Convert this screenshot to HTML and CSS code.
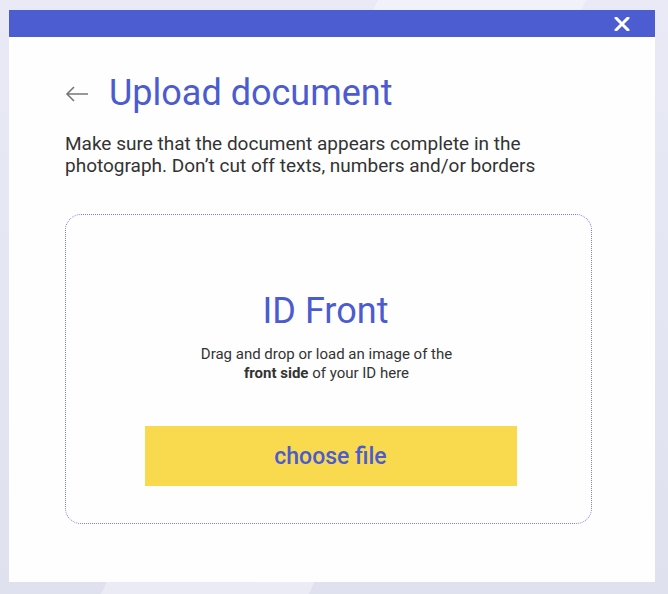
FILE: index.html
```html
<!DOCTYPE html>
<html lang="en">
<head>
<meta charset="utf-8">
<title>Upload document</title>
<link rel="stylesheet" href="styles.css">
</head>
<body>
<div class="modal">
  <div class="modal-bar">
    <button class="close" aria-label="Close">
      <svg width="16" height="14" viewBox="0 0 16 14"><path d="M2 1 L14 13 M14 1 L2 13" stroke="#fff" stroke-width="3" stroke-linecap="round"/></svg>
    </button>
  </div>
  <div class="modal-body">
    <div class="title-row">
      <svg class="back" width="24" height="16" viewBox="0 0 24 16"><path d="M23 8 H2 M9 1 L2 8 L9 15" fill="none" stroke="#777" stroke-width="1.6"/></svg>
      <h1 class="title">Upload document</h1>
    </div>
    <p class="lead">Make sure that the document appears complete in the photograph. Don’t cut off texts, numbers and/or borders</p>
    <div class="dropzone">
      <h2 class="dz-title">ID Front</h2>
      <p class="dz-text">Drag and drop or load an image of the<br><strong>front side</strong> of your ID here</p>
      <button class="choose">choose file</button>
    </div>
  </div>
</div>
</body>
</html>
```
FILE: styles.css
```css
* { box-sizing: border-box; }
html, body { height: 100%; }
body {
  margin: 0;
  padding: 10px 13px 12px 9px;
  font-family: Roboto, "Liberation Sans", sans-serif;
  background:
    linear-gradient(115deg, rgba(255,255,255,0) 0%, rgba(255,255,255,0) 40%, rgba(255,255,255,0.35) 40%, rgba(255,255,255,0.35) 62%, rgba(255,255,255,0) 62%),
    linear-gradient(180deg, #e9eaf6 0%, #dfe1ef 100%);
}
.modal {
  width: 646px;
  height: 572px;
  background: #fefefe;
  display: flex;
  flex-direction: column;
}
.modal-bar {
  height: 27px;
  background: #4c5dd1;
  display: flex;
  justify-content: flex-end;
  align-items: center;
  padding-right: 25px;
}
.close {
  border: 0;
  background: none;
  padding: 0;
  display: flex;
  cursor: pointer;
}
.modal-body {
  padding: 36px 63px 0 56px;
}
.title-row {
  display: flex;
  align-items: center;
  gap: 20px;
}
.back { margin-top: 2px; }
.title {
  margin: 0;
  font-size: 36px;
  line-height: 40px;
  font-weight: 400;
  color: #4b5bd0;
}
.lead {
  margin: 20px 0 0;
  font-size: 19px;
  line-height: 22px;
  color: #333;
}
.dropzone {
  margin-top: 37px;
  height: 310px;
  border: 1px dotted #7880e4;
  border-radius: 16px;
  display: flex;
  flex-direction: column;
  align-items: center;
  padding-top: 76px;
}
.dz-title {
  margin: 0 6px 0 0;
  font-size: 36px;
  line-height: 40px;
  font-weight: 400;
  color: #4b5bd0;
}
.dz-text {
  margin: 14px 4px 0 0;
  text-align: center;
  font-size: 15px;
  line-height: 19px;
  color: #333;
}
.dz-text strong { font-weight: 700; }
.choose {
  margin: 43px 0 0 4px;
  width: 372px;
  height: 60px;
  border: 0;
  background: #f9da4e;
  color: #4b5bd0;
  font-family: Roboto, "Liberation Sans", sans-serif;
  font-size: 23px;
  font-weight: 500;
  cursor: pointer;
}
```
